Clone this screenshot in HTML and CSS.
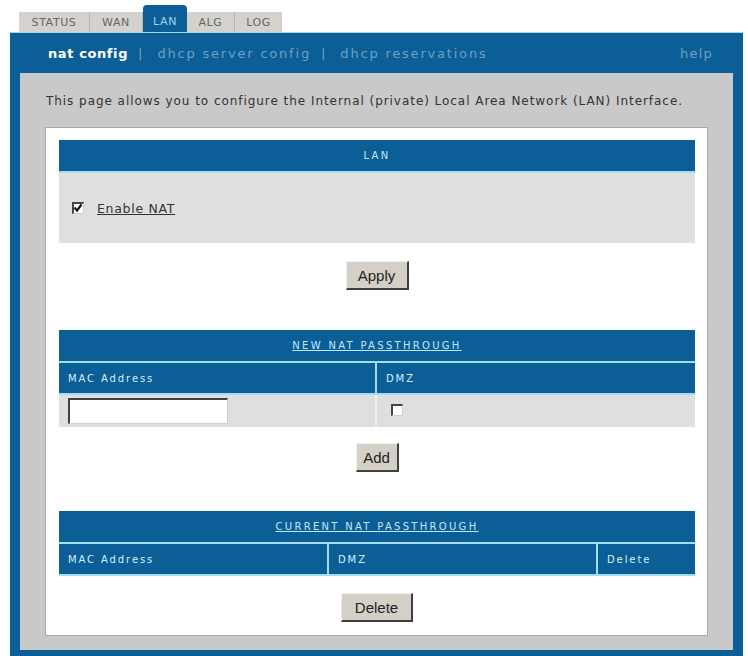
FILE: index.html
```html
<!DOCTYPE html>
<html lang="en">
<head>
    <meta charset="UTF-8">
    <title>LAN - nat config</title>
    <link rel="stylesheet" href="styles.css">
</head>
<body>
    <div class="tabs">
        <div class="tab">STATUS</div>
        <div class="tab">WAN</div>
        <div class="tab active">LAN</div>
        <div class="tab">ALG</div>
        <div class="tab">LOG</div>
    </div>

    <div class="frame">
        <div class="subnav">
            <span class="sub current">nat config</span>
            <span class="sep">|</span>
            <span class="sub">dhcp server config</span>
            <span class="sep">|</span>
            <span class="sub">dhcp reservations</span>
            <span class="sub help">help</span>
        </div>

        <div class="panel">
            <p class="intro">This page allows you to configure the Internal (private) Local Area Network (LAN) Interface.</p>

            <div class="box">
                <table class="grid">
                    <tr><th class="title">LAN</th></tr>
                    <tr>
                        <td class="row tall">
                            <label class="check-label">
                                <span class="check checked">
                                    <svg width="10" height="10" viewBox="0 0 10 10"><polyline points="1.5,4.5 4,7.5 8.5,1.5" fill="none" stroke="#111" stroke-width="2.2"/></svg>
                                </span>
                                <span class="link">Enable NAT</span>
                            </label>
                        </td>
                    </tr>
                </table>
                <div class="actions"><button class="btn apply">Apply</button></div>

                <table class="grid">
                    <tr><th class="title" colspan="2"><span class="link">NEW NAT PASSTHROUGH</span></th></tr>
                    <tr>
                        <th class="col col-mac">MAC Address</th>
                        <th class="col col-dmz div">DMZ</th>
                    </tr>
                    <tr>
                        <td class="row"><input type="text" class="mac-input"></td>
                        <td class="row div-light"><span class="check dmz-check"></span></td>
                    </tr>
                </table>
                <div class="actions"><button class="btn add">Add</button></div>

                <table class="grid">
                    <tr><th class="title" colspan="3"><span class="link">CURRENT NAT PASSTHROUGH</span></th></tr>
                    <tr>
                        <th class="col cur-mac">MAC Address</th>
                        <th class="col cur-dmz div">DMZ</th>
                        <th class="col div">Delete</th>
                    </tr>
                </table>
                <div class="actions"><button class="btn del">Delete</button></div>
            </div>
        </div>
    </div>
</body>
</html>
```

FILE: styles.css
```css
body {
    margin: 0;
    background: #ffffff;
    font-family: "DejaVu Sans", Verdana, sans-serif;
}

/* top tabs */
.tabs {
    display: flex;
    align-items: flex-end;
    height: 32px;
    padding-left: 19px;
}

.tab {
    height: 20px;
    line-height: 21px;
    padding: 0 6px;
    background: #d5d2ce;
    color: #666666;
    font-size: 11px;
    letter-spacing: 0.6px;
    border-right: 1px solid #b9b6b2;
    text-align: center;
}

.tab:nth-child(1) { width: 58px; }
.tab:nth-child(2) { width: 40px; }
.tab:nth-child(4) { width: 35px; }
.tab:nth-child(5) { width: 35px; border-right: none; }

.tab.active {
    width: 32px;
    height: 27px;
    line-height: 34px;
    background: #0b5f96;
    color: #9ed6f2;
    border-right: none;
    border-radius: 4px 4px 0 0;
}

/* blue frame */
.frame {
    width: 713px;
    margin-left: 10px;
    padding: 0 10px 6px 10px;
    background: #0b5f96;
    border-top: 1px solid #9fd8ef;
}

.subnav {
    display: flex;
    align-items: center;
    height: 40px;
    padding: 0 20px 0 28px;
    font-size: 13px;
    letter-spacing: 1.8px;
}

.sub {
    color: #6f9fc2;
}

.sub.current {
    color: #ffffff;
    font-weight: bold;
    letter-spacing: 0.6px;
}

.sep {
    color: #6f9fc2;
    letter-spacing: 0;
    margin: 0 15px 0 10px;
}

.help {
    margin-left: auto;
    letter-spacing: 1.2px;
}

/* gray panel */
.panel {
    background: #c9c9c9;
    padding: 1px 25px 14px 25px;
}

.intro {
    margin: 20px 0 0 1px;
    font-size: 12px;
    letter-spacing: 0.95px;
    color: #333333;
    height: 33px;
}

.box {
    background: #ffffff;
    border: 1px solid #a9a9a9;
    padding: 12px 11px 13px 13px;
}

/* blue tables */
.grid {
    width: 636px;
    border-collapse: collapse;
    border-spacing: 0;
}

.grid th {
    background: #0b5f96;
    color: #d9eef9;
    font-weight: normal;
    font-size: 10px;
    letter-spacing: 1.9px;
    text-align: left;
    padding: 0 0 0 9px;
}

.grid th.title {
    height: 31px;
    text-align: center;
    color: #c4e6f6;
    letter-spacing: 2.3px;
    padding: 0;
    border-bottom: 2px solid #a6dcf1;
}

.grid th.col {
    height: 30px;
    border-bottom: 2px solid #a6dcf1;
}

.grid th.div {
    border-left: 2px solid #a6dcf1;
}

.col-mac { width: 307px; }
.cur-mac { width: 259px; }
.cur-dmz { width: 258px; }

.link {
    text-decoration: underline;
}

.grid td.row {
    background: #dfdfdf;
    height: 32px;
    padding: 0 0 0 9px;
}

.grid td.tall {
    height: 70px;
    padding-left: 13px;
}

.grid td.div-light {
    border-left: 2px solid #ececec;
    padding-left: 14px;
}

.check-label {
    display: flex;
    align-items: center;
    gap: 13px;
    font-size: 12.5px;
    letter-spacing: 0.7px;
    color: #333333;
}

.check {
    display: inline-block;
    box-sizing: border-box;
    width: 12px;
    height: 12px;
    background: #ffffff;
    border-top: 2px solid #444444;
    border-left: 2px solid #444444;
    border-right: 1px solid #cfcfcf;
    border-bottom: 1px solid #cfcfcf;
    vertical-align: middle;
    position: relative;
}

.dmz-check {
    display: block;
    margin-top: -3px;
}

.check svg {
    position: absolute;
    left: -1px;
    top: -1px;
}

.mac-input {
    box-sizing: border-box;
    width: 160px;
    height: 26px;
    margin: 0;
    background: #ffffff;
    border-top: 2px solid #404040;
    border-left: 2px solid #404040;
    border-right: 1px solid #d0d0d0;
    border-bottom: 1px solid #d0d0d0;
    display: block;
}

/* buttons */
.actions {
    width: 636px;
    text-align: center;
}

.btn {
    font-family: "Liberation Sans", Arial, sans-serif;
    font-size: 15px;
    color: #222222;
    background: #d4d0c8;
    border-top: 1px solid #f2f2f2;
    border-left: 1px solid #f2f2f2;
    border-right: 2px solid #404040;
    border-bottom: 2px solid #404040;
    height: 29px;
    padding: 0;
}

.apply {
    width: 63px;
    margin: 18px 0 40px 0;
}

.add {
    width: 43px;
    margin: 16px 0 39px 0;
}

.del {
    width: 72px;
    margin: 17px 0 0 0;
}
```
